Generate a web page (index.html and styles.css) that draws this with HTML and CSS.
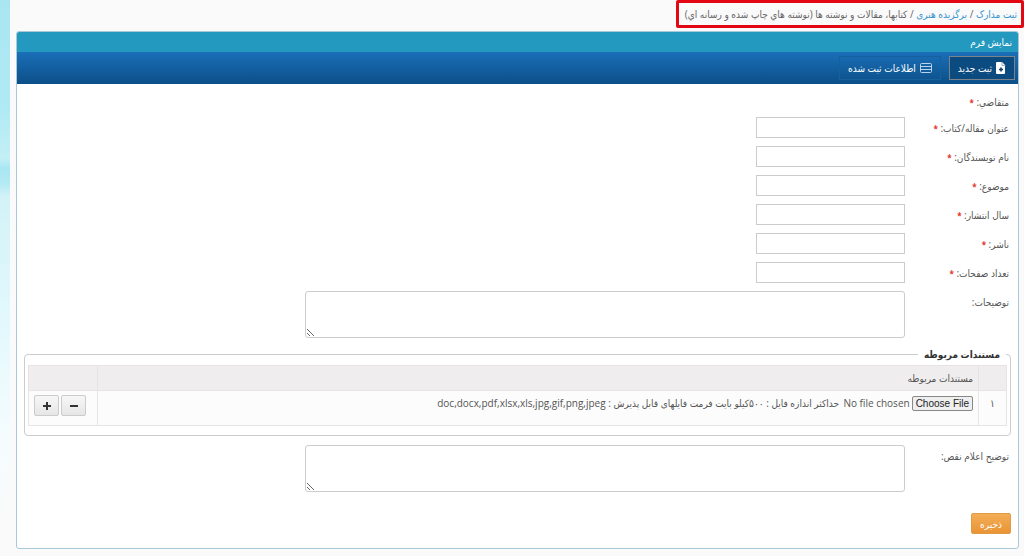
FILE: index.html
```html
<!DOCTYPE html>
<html lang="fa" dir="rtl">
<head>
    <meta charset="utf-8">
    <title>ثبت مدارک</title>
    <link rel="stylesheet" href="styles.css">
</head>
<body>
    <main class="content">
        <nav class="breadcrumb">
            <a href="#">ثبت مدارک</a>
            <span class="sep">/</span>
            <a href="#">برگزیده هنری</a>
            <span class="sep">/</span>
            <span>كتابها، مقالات و نوشته ها (نوشته هاي چاپ شده و رسانه اي)</span>
        </nav>

        <section class="panel">
            <h1 class="panel-title">نمایش فرم</h1>
            <div class="toolbar">
                <button type="button" class="tab active">
                    <svg width="10" height="12" viewBox="0 0 10 12">
                        <path d="M1 0h5l3 3v8a1 1 0 0 1-1 1H1a1 1 0 0 1-1-1V1a1 1 0 0 1 1-1z" fill="#fff"/>
                        <path d="M6 0v3.5h3.5" fill="none" stroke="#7d9dba" stroke-width=".8"/>
                        <path d="M5 5.5v4M3 7.5h4" stroke="#0d3f6e" stroke-width="1.6"/>
                    </svg>
                    ثبت جدید
                </button>
                <button type="button" class="tab">
                    <svg width="12" height="10" viewBox="0 0 12 10">
                        <rect x=".5" y=".5" width="11" height="9" rx="1" fill="none" stroke="#b9d3ea"/>
                        <path d="M0 3.5h12M0 6.5h12" stroke="#b9d3ea"/>
                    </svg>
                    اطلاعات ثبت شده
                </button>
            </div>

            <form class="form">
                <div class="row first">
                    <span class="label">متقاضي: <b class="req">*</b></span>
                </div>
                <div class="row">
                    <label class="label" for="title">عنوان مقاله/كتاب: <b class="req">*</b></label>
                    <input type="text" class="text" id="title">
                </div>
                <div class="row">
                    <label class="label" for="authors">نام نويسندگان: <b class="req">*</b></label>
                    <input type="text" class="text" id="authors">
                </div>
                <div class="row">
                    <label class="label" for="subject">موضوع: <b class="req">*</b></label>
                    <input type="text" class="text" id="subject">
                </div>
                <div class="row">
                    <label class="label" for="year">سال انتشار: <b class="req">*</b></label>
                    <input type="text" class="text" id="year">
                </div>
                <div class="row">
                    <label class="label" for="publisher">ناشر: <b class="req">*</b></label>
                    <input type="text" class="text" id="publisher">
                </div>
                <div class="row">
                    <label class="label" for="pages">تعداد صفحات: <b class="req">*</b></label>
                    <input type="text" class="text" id="pages">
                </div>
                <div class="row">
                    <label class="label" for="desc">توضيحات:</label>
                    <textarea class="area" id="desc"></textarea>
                </div>

                <fieldset class="docs">
                    <legend>مستندات مربوطه</legend>
                    <table class="docs-table">
                        <thead>
                            <tr>
                                <th class="num"></th>
                                <th id="docs-head">مستندات مربوطه</th>
                                <th class="actions"></th>
                            </tr>
                        </thead>
                        <tbody>
                            <tr>
                                <td class="num">۱</td>
                                <td>
                                    <div class="upload">
                                        <input type="file" class="file" id="file" aria-labelledby="docs-head">
                                        <label for="file">حداکثر اندازه فایل : ۵۰۰کیلو بایت فرمت فایلهای قابل پذیرش : <bdi>doc,docx,pdf,xlsx,xls,jpg,gif,png,jpeg</bdi></label>
                                    </div>
                                </td>
                                <td class="actions">
                                    <div class="buttons">
                                        <button type="button" class="small" aria-label="حذف">
                                            <svg width="8" height="8" viewBox="0 0 8 8"><path d="M0 4h8" stroke="#333" stroke-width="2"/></svg>
                                        </button>
                                        <button type="button" class="small" aria-label="افزودن">
                                            <svg width="8" height="8" viewBox="0 0 8 8"><path d="M0 4h8M4 0v8" stroke="#333" stroke-width="2"/></svg>
                                        </button>
                                    </div>
                                </td>
                            </tr>
                        </tbody>
                    </table>
                </fieldset>

                <div class="row">
                    <label class="label" for="defect">توضيح اعلام نقص:</label>
                    <textarea class="area" id="defect"></textarea>
                </div>
                <button type="submit" class="save">ذخیره</button>
            </form>
        </section>
    </main>
</body>
</html>
```
FILE: styles.css
```css
* {
    box-sizing: border-box;
}

body {
    margin: 0;
    min-height: 100vh;
    background: linear-gradient(#a9e6f2, #b0eaf4 110px, #c4eff6 158px, #a9e7f2 168px, #b4eaf3 184px, #d2f2f8 196px, #e4f9fd 330px, #f5fcfe 440px, #fafafa 520px);
    font-family: "Open Sans", "DejaVu Sans Condensed", "DejaVu Sans", sans-serif;
    font-size: 10px;
    line-height: 16px;
    color: #555;
}

button, input, textarea {
    font-family: inherit;
    font-size: inherit;
    line-height: inherit;
}

.content {
    min-height: 100vh;
    margin-left: 10px;
    padding: 0 5px 7px 6px;
    background-color: #fafafa;
}

.breadcrumb {
    width: fit-content;
    margin-right: -5px;
    margin-bottom: 3px;
    padding: 3px 4px 3px 6px;
    border: 3px solid #e30613;
    border-radius: 2px;
    color: #666;
}

.breadcrumb a {
    color: #3694d0;
    text-decoration: none;
}

.panel {
    border: 1px solid #a9c9da;
    border-radius: 3px;
    background-color: white;
    overflow: hidden;
}

.panel-title {
    margin: 0;
    padding: 2px 6px;
    background-color: #2499bf;
    color: white;
    font-size: 10px;
    font-weight: normal;
}

.toolbar {
    display: flex;
    gap: 8px;
    padding: 4px 3px;
    background: linear-gradient(#1a6fb8, #0c4f88);
}

.tab {
    display: flex;
    align-items: center;
    gap: 4px;
    height: 24px;
    padding: 0 8px;
    border: 1px solid #17609e;
    background: none;
    color: white;
}

.tab.active {
    border-color: #7d8288;
    background-color: #0c4b80;
}

.form {
    padding: 10px 7px 14px;
}

.row {
    display: flex;
    align-items: flex-start;
    margin-bottom: 8px;
    padding-right: 2px;
}

.row.first {
    margin-bottom: 6px;
}

.label {
    width: 104px;
    padding-top: 3px;
    line-height: 17px;
}

.first .label {
    padding-top: 0;
}

.req {
    color: #e0342b;
    font-size: 8px;
}

.text {
    width: 149px;
    height: 21px;
    border: 1px solid #ccc;
}

.area {
    width: 600px;
    height: 47px;
    border: 1px solid #ccc;
    border-radius: 3px;
}

.docs {
    margin: 0 0 9px;
    padding: 3px 3px 9px;
    border: 1px solid #ccc;
    border-radius: 4px;
}

.docs legend {
    margin-right: 1px;
    padding: 0 6px;
    color: #333;
    font-size: 10px;
    font-weight: bold;
    line-height: 16px;
}

.docs-table {
    width: 100%;
    border-collapse: collapse;
}

.docs-table th, .docs-table td {
    padding: 4px 5px;
    border: 1px solid #e6e4e5;
    text-align: right;
    font-weight: normal;
}

.docs-table th {
    height: 25px;
    background-color: #efedee;
}

.docs-table td {
    height: 35px;
    background-color: #fcfcfc;
    vertical-align: top;
}

.docs-table .num {
    width: 28px;
    text-align: center;
}

.docs-table .actions {
    width: 69px;
}

.upload {
    display: flex;
    align-items: center;
}

.file {
    width: 134px;
}

.file::file-selector-button {
    margin: 0 0 0 2px;
    padding: 0 3px;
    border: 1px solid #888;
    border-radius: 2px;
    background-color: #efefef;
    color: #222;
    font-family: "Liberation Sans", sans-serif;
    font-size: 10px;
    line-height: 13px;
}

.buttons {
    display: flex;
    gap: 2px;
    padding-right: 6px;
}

.small {
    display: flex;
    align-items: center;
    justify-content: center;
    width: 25px;
    height: 21px;
    padding: 0;
    border: 1px solid #ccc;
    border-radius: 2px;
    background: linear-gradient(#f7f7f7, #e6e6e6);
}

.save {
    display: block;
    height: 21px;
    margin-top: 21px;
    padding: 0 8px;
    border: 1px solid #e09a45;
    border-radius: 2px;
    background: linear-gradient(#f3ae58, #e99435);
    color: white;
}
```
